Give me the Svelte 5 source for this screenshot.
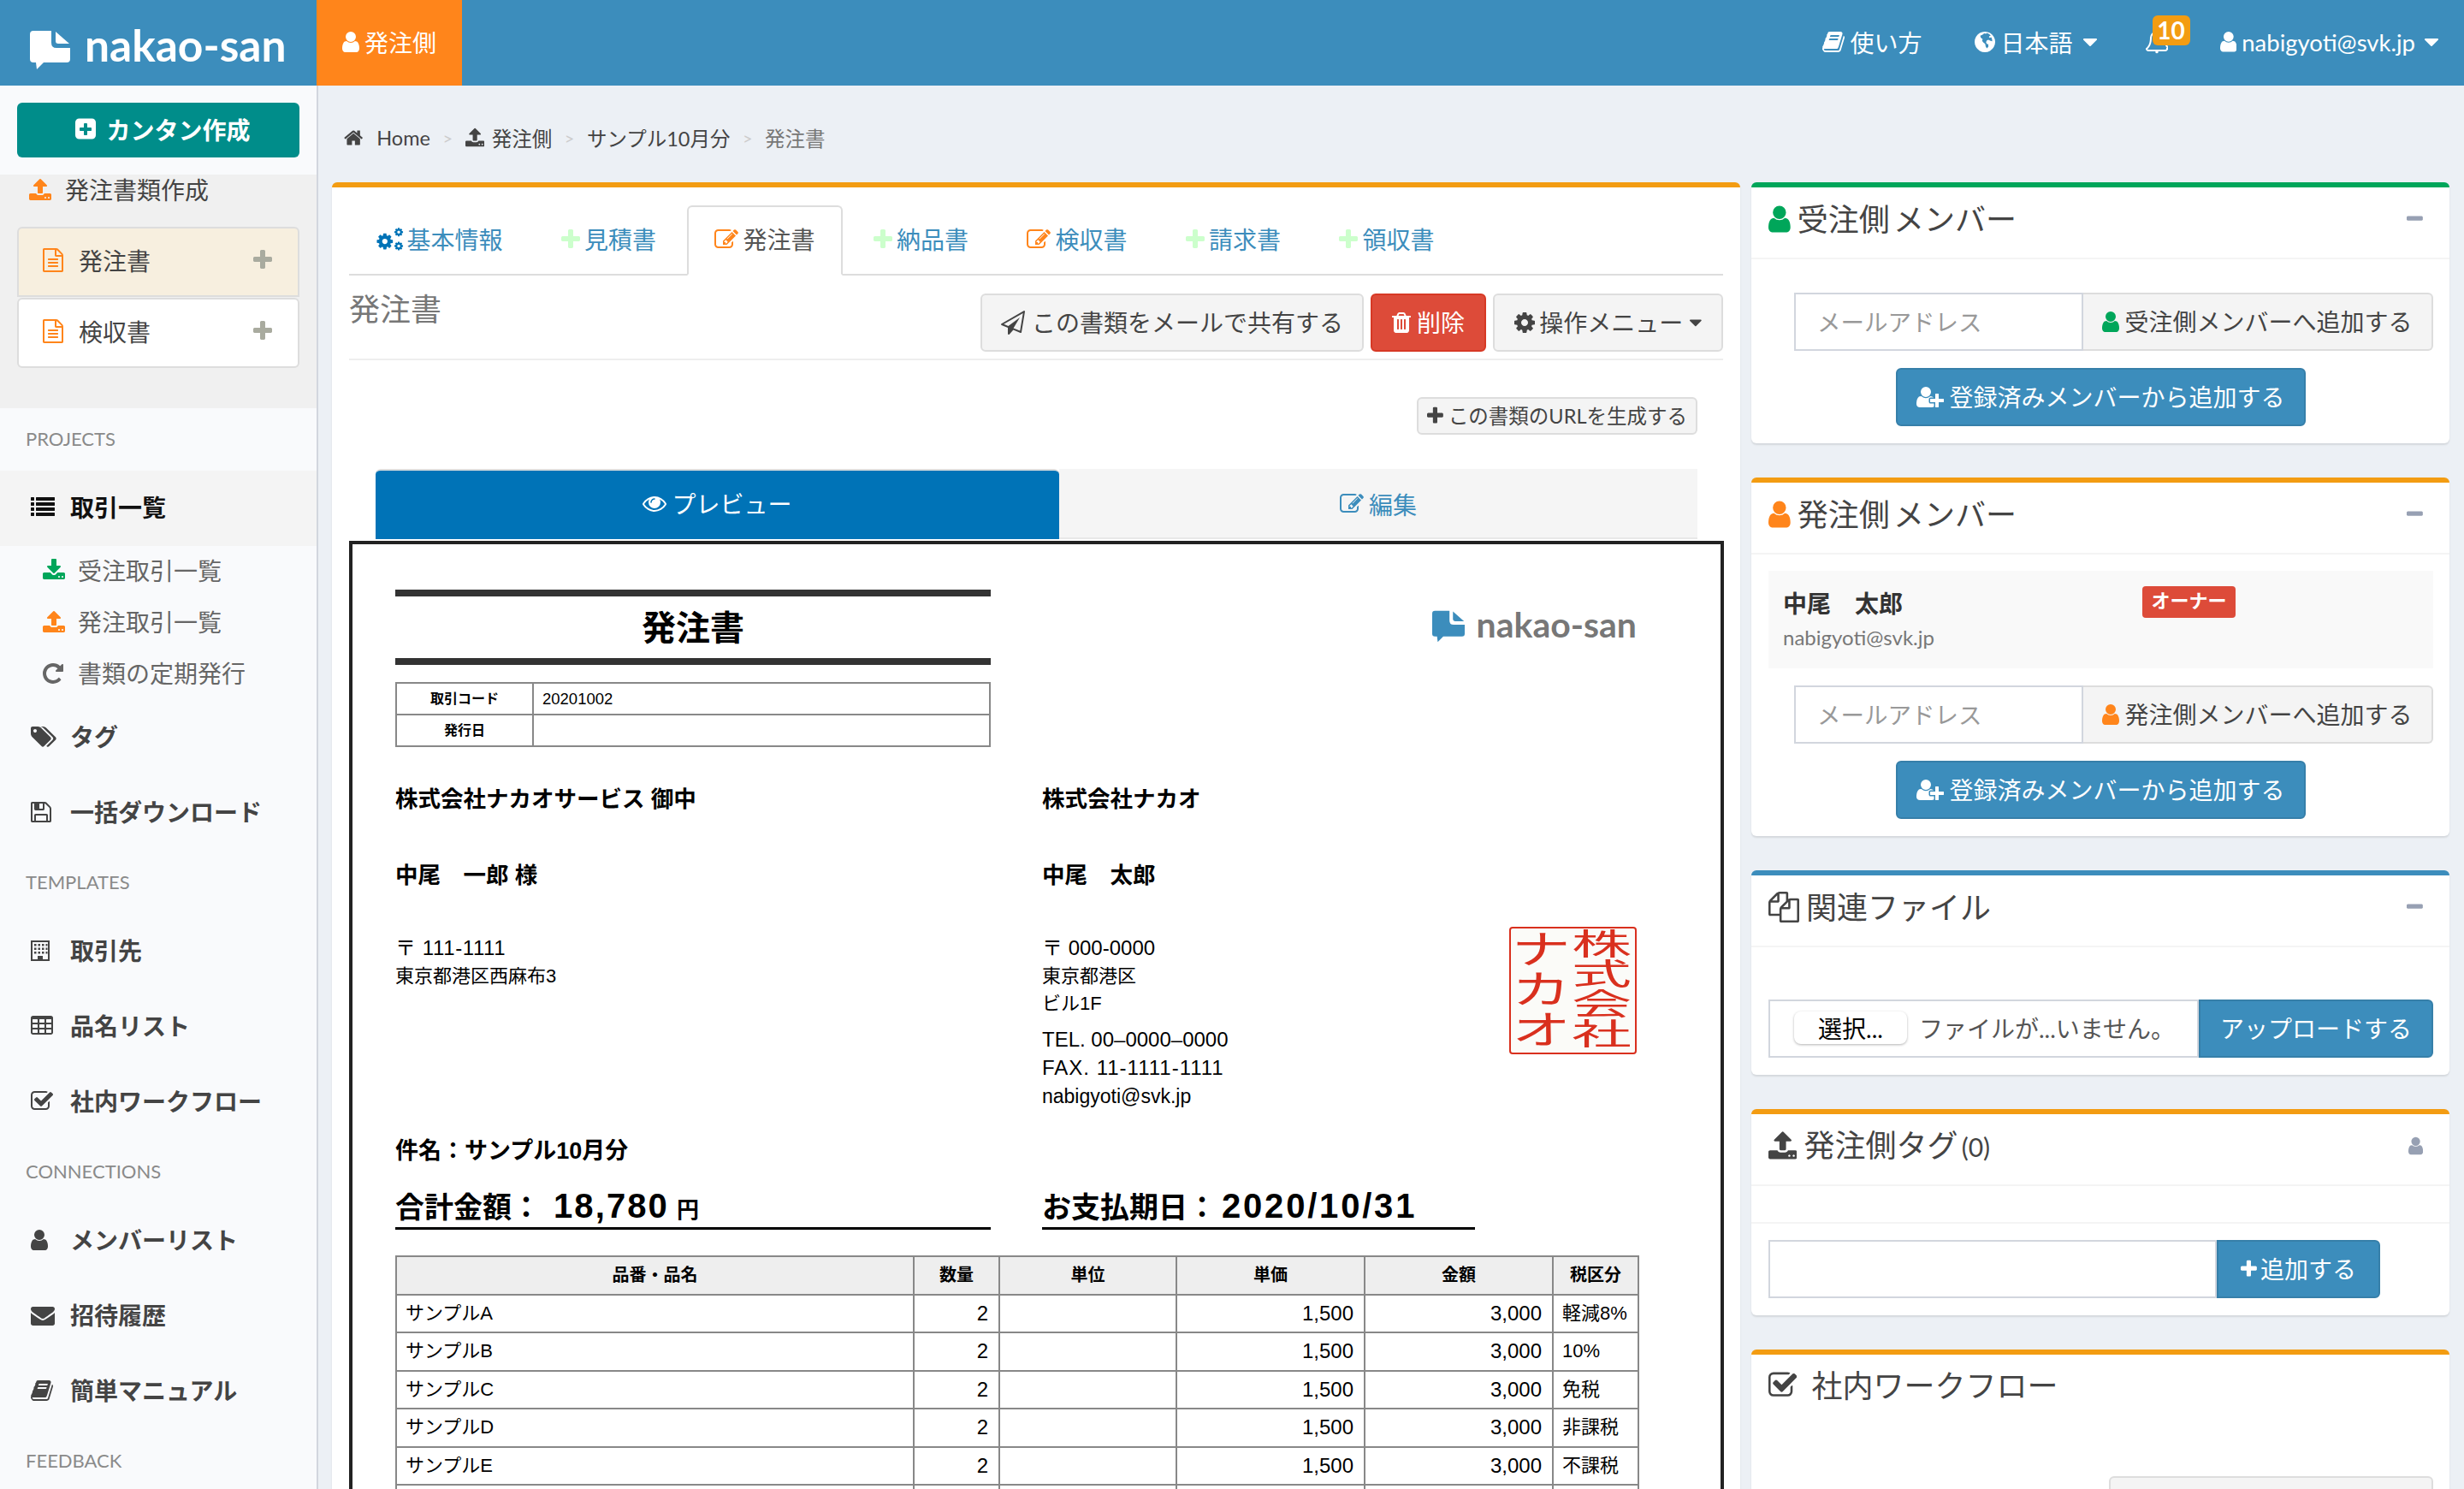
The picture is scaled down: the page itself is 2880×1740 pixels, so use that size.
<script lang="ts">
  // font-awesome 4 glyphs on their 1792 grid: [viewBox, path]
  const ICONS: Record<string, [string, string]> = {
    user: ["256 0 1280 1792", "M1536 1399q0 109-62.5 187t-150.5 78h-854q-88 0-150.5-78t-62.5-187q0-85 8.5-160.5t31.5-152 58.5-131 94-89 134.5-34.5q131 128 313 128t313-128q76 0 134.5 34.5t94 89 58.5 131 31.5 152 8.5 160.5zm-256-887q0 159-112.5 271.5t-271.5 112.5-271.5-112.5-112.5-271.5 112.5-271.5 271.5-112.5 271.5 112.5 112.5 271.5z"],
    plus: ["192 0 1408 1792", "M1600 736v192q0 40-28 68t-68 28h-416v416q0 40-28 68t-68 28h-192q-40 0-68-28t-28-68v-416h-416q-40 0-68-28t-28-68v-192q0-40 28-68t68-28h416v-416q0-40 28-68t68-28h192q40 0 68 28t28 68v416h416q40 0 68 28t28 68z"],
    minus: ["192 0 1408 1792", "M1600 736v192q0 40-28 68t-68 28h-1216q-40 0-68-28t-28-68v-192q0-40 28-68t68-28h1216q40 0 68 28t28 68z"],
    caret: ["384 0 1024 1792", "M1408 704q0 26-19 45l-448 448q-19 19-45 19t-45-19l-448-448q-19-19-19-45t19-45 45-19h896q26 0 45 19t19 45z"],
    plusSquare: ["128 0 1536 1792", "M1344 960v-128q0-26-19-45t-45-19h-256v-256q0-26-19-45t-45-19h-128q-26 0-45 19t-19 45v256h-256q-26 0-45 19t-19 45v128q0 26 19 45t45 19h256v256q0 26 19 45t45 19h128q26 0 45-19t19-45v-256h256q26 0 45-19t19-45zm320-576v960q0 119-84.5 203.5t-203.5 84.5h-960q-119 0-203.5-84.5t-84.5-203.5v-960q0-119 84.5-203.5t203.5-84.5h960q119 0 203.5 84.5t84.5 203.5z"],
    upload: ["64 0 1664 1792", "M1344 1472q0-26-19-45t-45-19-45 19-19 45 19 45 45 19 45-19 19-45zm256 0q0-26-19-45t-45-19-45 19-19 45 19 45 45 19 45-19 19-45zm128-224v320q0 40-28 68t-68 28h-1472q-40 0-68-28t-28-68v-320q0-40 28-68t68-28h427q21 56 70.5 92t110.5 36h256q61 0 110.5-36t70.5-92h427q40 0 68 28t28 68zm-325-648q-17 40-59 40h-256v448q0 26-19 45t-45 19h-256q-26 0-45-19t-19-45v-448h-256q-42 0-59-40-17-39 14-69l448-448q18-19 45-19t45 19l448 448q31 30 14 69z"],
    download: ["64 0 1664 1792", "M1344 1344q0-26-19-45t-45-19-45 19-19 45 19 45 45 19 45-19 19-45zm256 0q0-26-19-45t-45-19-45 19-19 45 19 45 45 19 45-19 19-45zm128-224v320q0 40-28 68t-68 28h-1472q-40 0-68-28t-28-68v-320q0-40 28-68t68-28h465l135 136q58 56 136 56t136-56l136-136h464q40 0 68 28t28 68zm-325-569q17 41-14 70l-448 448q-18 19-45 19t-45-19l-448-448q-31-29-14-70 17-39 59-39h256v-448q0-26 19-45t45-19h256q26 0 45 19t19 45v448h256q42 0 59 39z"],
    file: ["128 0 1536 1792", "M1596 380q28 28 48 76t20 88v1152q0 40-28 68t-68 28h-1344q-40 0-68-28t-28-68v-1600q0-40 28-68t68-28h896q40 0 88 20t76 48zm-444-244v376h376q-10-29-22-41l-313-313q-12-12-41-22zm384 1528v-1024h-416q-40 0-68-28t-28-68v-416h-768v1536h1280zm-1024-864q0-14 9-23t23-9h704q14 0 23 9t9 23v64q0 14-9 23t-23 9h-704q-14 0-23-9t-9-23v-64zm736 224q14 0 23 9t9 23v64q0 14-9 23t-23 9h-704q-14 0-23-9t-9-23v-64q0-14 9-23t23-9h704zm0 256q14 0 23 9t9 23v64q0 14-9 23t-23 9h-704q-14 0-23-9t-9-23v-64q0-14 9-23t23-9h704z"],
    home: ["64 0 1664 1792", "M1472 992v480q0 26-19 45t-45 19h-384v-384h-256v384h-384q-26 0-45-19t-19-45v-480q0-1 .5-3t.5-3l575-474 575 474q1 2 1 6zm223-69l-62 74q-8 9-21 11h-3q-13 0-21-7l-692-577-692 577q-12 8-24 7-13-2-21-11l-62-74q-8-10-7-23.5t11-21.5l719-599q32-26 76-26t76 26l244 204v-195q0-14 9-23t23-9h192q14 0 23 9t9 23v408l219 182q10 8 11 21.5t-7 23.5z"],
    list: ["0 0 1792 1792", "M256 1312v192q0 13-9.5 22.5t-22.5 9.5h-192q-13 0-22.5-9.5t-9.5-22.5v-192q0-13 9.5-22.5t22.5-9.5h192q13 0 22.5 9.5t9.5 22.5zm0-384v192q0 13-9.5 22.5t-22.5 9.5h-192q-13 0-22.5-9.5t-9.5-22.5v-192q0-13 9.5-22.5t22.5-9.5h192q13 0 22.5 9.5t9.5 22.5zm0-384v192q0 13-9.5 22.5t-22.5 9.5h-192q-13 0-22.5-9.5t-9.5-22.5v-192q0-13 9.5-22.5t22.5-9.5h192q13 0 22.5 9.5t9.5 22.5zm1536 768v192q0 13-9.5 22.5t-22.5 9.5h-1344q-13 0-22.5-9.5t-9.5-22.5v-192q0-13 9.5-22.5t22.5-9.5h1344q13 0 22.5 9.5t9.5 22.5zm-1536-1152v192q0 13-9.5 22.5t-22.5 9.5h-192q-13 0-22.5-9.5t-9.5-22.5v-192q0-13 9.5-22.5t22.5-9.5h192q13 0 22.5 9.5t9.5 22.5zm1536 768v192q0 13-9.5 22.5t-22.5 9.5h-1344q-13 0-22.5-9.5t-9.5-22.5v-192q0-13 9.5-22.5t22.5-9.5h1344q13 0 22.5 9.5t9.5 22.5zm0-384v192q0 13-9.5 22.5t-22.5 9.5h-1344q-13 0-22.5-9.5t-9.5-22.5v-192q0-13 9.5-22.5t22.5-9.5h1344q13 0 22.5 9.5t9.5 22.5zm0-384v192q0 13-9.5 22.5t-22.5 9.5h-1344q-13 0-22.5-9.5t-9.5-22.5v-192q0-13 9.5-22.5t22.5-9.5h1344q13 0 22.5 9.5t9.5 22.5z"],
    repeat: ["128 0 1536 1792", "M1664 256v448q0 26-19 45t-45 19h-448q-42 0-59-40-17-39 14-69l138-138q-148-137-349-137-104 0-198.5 40.5t-163.5 109.5-109.5 163.5-40.5 198.5 40.5 198.5 109.5 163.5 163.5 109.5 198.5 40.5q119 0 225-52t179-147q7-10 23-12 15 0 25 9l137 138q9 8 9.5 20.5t-7.5 22.5q-109 132-264 204.5t-327 72.5q-156 0-298-61t-245-164-164-245-61-298 61-298 164-245 245-164 298-61q147 0 284.5 55.5t244.5 156.5l130-129q29-31 70-14 39 17 39 59z"],
    tags: ["0 0 1920 1792", "M448 448q0-53-37.5-90.5t-90.5-37.5-90.5 37.5-37.5 90.5 37.5 90.5 90.5 37.5 90.5-37.5 37.5-90.5zm1067 576q0 53-37 90l-491 492q-39 37-91 37-53 0-90-37l-715-716q-38-37-64.5-101t-26.5-117v-416q0-52 38-90t90-38h416q53 0 117 26.5t102 64.5l715 714q37 39 37 91zm384 0q0 53-37 90l-491 492q-39 37-91 37-36 0-59-14t-53-45l470-470q37-37 37-90 0-52-37-91l-715-714q-38-38-102-64.5t-117-26.5h224q53 0 117 26.5t102 64.5l715 714q37 39 37 91z"],
    floppy: ["128 0 1536 1792", "M512 1536h768v-384h-768v384zm896 0h128v-896q0-14-10-38.5t-20-34.5l-281-281q-10-10-34-20t-39-10v416q0 40-28 68t-68 28h-576q-40 0-68-28t-28-68v-416h-128v1280h128v-416q0-40 28-68t68-28h832q40 0 68 28t28 68v416zm-384-928v-320q0-13-9.5-22.5t-22.5-9.5h-192q-13 0-22.5 9.5t-9.5 22.5v320q0 13 9.5 22.5t22.5 9.5h192q13 0 22.5-9.5t9.5-22.5zm640 32v928q0 40-28 68t-68 28h-1344q-40 0-68-28t-28-68v-1344q0-40 28-68t68-28h928q40 0 88 20t76 48l280 280q28 28 48 76t20 88z"],
    building: ["128 0 1408 1792", "M128 1664V128h1408v1536H128zm128-128h384v-256h384v256h384V256H256v1280zm128-1152v160h160V384H384zm288 0v160h160V384H672zm288 0v160h160V384H960zm288 0v160h128V384h-128zM384 672v160h160V672H384zm288 0v160h160V672H672zm288 0v160h160V672H960zm288 0v160h128V672h-128zM384 960v160h160V960H384zm288 0v160h160V960H672zm288 0v160h160V960H960zm288 0v160h128V960h-128z"],
    table: ["64 0 1664 1792", "M576 1376v-192q0-14-9-23t-23-9h-320q-14 0-23 9t-9 23v192q0 14 9 23t23 9h320q14 0 23-9t9-23zm0-384v-192q0-14-9-23t-23-9h-320q-14 0-23 9t-9 23v192q0 14 9 23t23 9h320q14 0 23-9t9-23zm512 384v-192q0-14-9-23t-23-9h-320q-14 0-23 9t-9 23v192q0 14 9 23t23 9h320q14 0 23-9t9-23zm-512-768v-192q0-14-9-23t-23-9h-320q-14 0-23 9t-9 23v192q0 14 9 23t23 9h320q14 0 23-9t9-23zm512 384v-192q0-14-9-23t-23-9h-320q-14 0-23 9t-9 23v192q0 14 9 23t23 9h320q14 0 23-9t9-23zm512 384v-192q0-14-9-23t-23-9h-320q-14 0-23 9t-9 23v192q0 14 9 23t23 9h320q14 0 23-9t9-23zm-512-768v-192q0-14-9-23t-23-9h-320q-14 0-23 9t-9 23v192q0 14 9 23t23 9h320q14 0 23-9t9-23zm512 384v-192q0-14-9-23t-23-9h-320q-14 0-23 9t-9 23v192q0 14 9 23t23 9h320q14 0 23-9t9-23zm0-384v-192q0-14-9-23t-23-9h-320q-14 0-23 9t-9 23v192q0 14 9 23t23 9h320q14 0 23-9t9-23zm128-320v1088q0 66-47 113t-113 47h-1344q-66 0-113-47t-47-113v-1088q0-66 47-113t113-47h1344q66 0 113 47t47 113z"],
    check: ["64 0 1664 1792", "M1472 930v318q0 119-84.5 203.5t-203.5 84.5h-832q-119 0-203.5-84.5t-84.5-203.5v-832q0-119 84.5-203.5t203.5-84.5h832q63 0 117 25 15 7 18 23 3 17-9 29l-49 49q-10 10-23 10-3 0-9-2-23-6-45-6h-832q-66 0-113 47t-47 113v832q0 66 47 113t113 47h832q66 0 113-47t47-113v-254q0-13 9-22l64-64q10-10 23-10 6 0 12 3 20 8 20 29zm231-489l-814 814q-24 24-57 24t-57-24l-430-430q-24-24-24-57t24-57l110-110q24-24 57-24t57 24l263 263 647-647q24-24 57-24t57 24l110 110q24 24 24 57t-24 57z"],
    envelope: ["0 0 1792 1792", "M1792 710v794q0 66-47 113t-113 47h-1472q-66 0-113-47t-47-113v-794q44 49 101 87 362 246 497 345 57 42 92.5 65.5t94.5 48 110 24.5h2q51 0 110-24.5t94.5-48 92.5-65.5q170-123 498-345 57-39 100-87zm0-294q0 79-49 151t-122 123q-376 261-468 325-10 7-42.5 30.5t-54 38-52 32.5-57.5 27-50 9h-2q-23 0-50-9t-57.5-27-52-32.5-54-38-42.5-30.5q-91-64-262-182.5t-205-142.5q-62-42-117-115.5t-55-136.5q0-78 41.5-130t118.5-52h1472q65 0 112.5 47t47.5 113z"],
    book: ["64 0 1664 1792", "M1703 478q40 57 18 129l-275 906q-19 64-76.5 107.5t-122.5 43.5h-923q-77 0-148.5-53.5t-99.5-131.5q-24-67-2-127 0-4 3-27t4-37q1-8-3-21.5t-3-19.5q2-11 8-21t16.5-23.5 16.5-23.5q23-38 45-91.5t30-91.5q3-10 .5-30t-.5-28q3-11 17-28t17-23q21-36 42-92t25-90q1-9-2.5-32t.5-28q4-13 22-30.5t22-22.5q19-26 42.5-84.5t27.5-96.5q1-8-3-25.5t-2-26.5q2-8 9-18t18-23 17-21q8-12 16.5-30.5t15-35 16-36 19.5-32 26.5-23.5 36-11.5 47.5 5.5l-1 3q38-9 51-9h761q74 0 114 56t18 130l-274 906q-36 119-71.5 153.5t-128.5 34.5h-869q-27 0-38 15-11 16-1 43 24 70 144 70h923q29 0 56-15.5t35-41.5l300-987q7-22 5-57 38 15 59 43zm-1064 2q-4 13 2 22.5t20 9.5h608q13 0 25.5-9.5t16.5-22.5l21-64q4-13-2-22.5t-20-9.5h-608q-13 0-25.5 9.5t-16.5 22.5zm-83 256q-4 13 2 22.5t20 9.5h608q13 0 25.5-9.5t16.5-22.5l21-64q4-13-2-22.5t-20-9.5h-608q-13 0-25.5 9.5t-16.5 22.5z"],
    edit: ["0 0 1792 1792", "M888 1184l116-116-152-152-116 116v56h96v96h56zm440-720q-16-16-33 1l-350 350q-17 17-1 33t33-1l350-350q17-17 1-33zm80 594v190q0 119-84.5 203.5t-203.5 84.5h-832q-119 0-203.5-84.5t-84.5-203.5v-832q0-119 84.5-203.5t203.5-84.5h832q63 0 117 25 15 7 18 23 3 17-9 29l-49 49q-14 14-32 8-23-6-45-6h-832q-66 0-113 47t-47 113v832q0 66 47 113t113 47h832q66 0 113-47t47-113v-126q0-13 9-22l64-64q15-15 35-7t20 29zm-96-738l288 288-672 672h-288v-288zm444 132l-92 92-288-288 92-92q28-28 68-28t68 28l152 152q28 28 28 68t-28 68z"],
    eye: ["0 0 1792 1792", "M1664 960q-152-236-381-353 61 104 61 225 0 185-131.5 316.5t-316.5 131.5-316.5-131.5-131.5-316.5q0-121 61-225-229 117-381 353 133 205 333.5 326.5t434.5 121.5 434.5-121.5 333.5-326.5zm-720-384q0-20-14-34t-34-14q-125 0-214.5 89.5t-89.5 214.5q0 20 14 34t34 14 34-14 14-34q0-86 61-147t147-61q20 0 34-14t14-34zm848 384q0 34-20 69-140 230-376.5 368.5t-499.5 138.5-499.5-139-376.5-368q-20-35-20-69t20-69q140-229 376.5-368t499.5-139 499.5 139 376.5 368q20 35 20 69z"],
    plane: ["0 0 1792 1792", "M1764 11q33 24 27 64l-256 1536q-5 29-32 45-14 8-31 8-11 0-24-5l-527-215-298 327q-18 21-47 21-14 0-23-4-19-7-30-23.5t-11-36.5v-452l-472-193q-37-14-40-55-3-39 32-59l1664-960q35-21 68 2zm-342 1499l221-1323-1434 827 336 137 863-639-478 797z"],
    trash: ["192 0 1408 1792", "M704 1376v-704q0-14-9-23t-23-9h-64q-14 0-23 9t-9 23v704q0 14 9 23t23 9h64q14 0 23-9t9-23zm256 0v-704q0-14-9-23t-23-9h-64q-14 0-23 9t-9 23v704q0 14 9 23t23 9h64q14 0 23-9t9-23zm256 0v-704q0-14-9-23t-23-9h-64q-14 0-23 9t-9 23v704q0 14 9 23t23 9h64q14 0 23-9t9-23zm-544-992h448l-48-117q-7-9-17-11h-317q-10 2-17 11zm928 32v64q0 14-9 23t-23 9h-96v948q0 83-47 143.5t-113 60.5h-832q-66 0-113-58.5t-47-141.5v-952h-96q-14 0-23-9t-9-23v-64q0-14 9-23t23-9h309l70-167q15-37 54-63t79-26h320q40 0 79 26t54 63l70 167h309q14 0 23 9t9 23z"],
    cog: ["128 0 1536 1792", "M1152 896q0-106-75-181t-181-75-181 75-75 181 75 181 181 75 181-75 75-181zm512-109v222q0 12-8 23t-20 13l-185 28q-19 54-39 91 35 50 107 138 10 12 10 25t-9 23q-27 37-99 108t-94 71q-12 0-26-9l-138-108q-44 23-91 38-16 136-29 186-7 28-36 28h-222q-14 0-24.5-8.5t-11.5-21.5l-28-184q-49-16-90-37l-141 107q-10 9-25 9-14 0-25-11-126-114-165-168-7-10-7-23 0-12 8-23 15-21 51-66.5t54-70.5q-27-50-41-99l-183-27q-13-2-21-12.5t-8-23.5v-222q0-12 8-23t19-13l186-28q14-46 39-92-40-57-107-138-10-12-10-24 0-10 9-23 26-36 98.5-107.5t94.5-71.5q13 0 26 10l138 107q44-23 91-38 16-136 29-186 7-28 36-28h222q14 0 24.5 8.5t11.5 21.5l28 184q49 16 90 37l142-107q9-9 24-9 13 0 25 10 129 119 165 170 7 8 7 22 0 12-8 23-15 21-51 66.5t-54 70.5q26 50 41 98l183 28q13 2 21 12.5t8 23.5z"],
    userPlus: ["0 0 2048 1792", "M704 896q-159 0-271.5-112.5t-112.5-271.5 112.5-271.5 271.5-112.5 271.5 112.5 112.5 271.5-112.5 271.5-271.5 112.5zm960 128h352q13 0 22.5 9.5t9.5 22.5v192q0 13-9.5 22.5t-22.5 9.5h-352v352q0 13-9.5 22.5t-22.5 9.5h-192q-13 0-22.5-9.5t-9.5-22.5v-352h-352q-13 0-22.5-9.5t-9.5-22.5v-192q0-13 9.5-22.5t22.5-9.5h352v-352q0-13 9.5-22.5t22.5-9.5h192q13 0 22.5 9.5t9.5 22.5v352zm-736 224q0 52 38 90t90 38h256v238q-68 50-171 50h-874q-121 0-194-69t-73-190q0-53 3.5-103.5t14-109 26.5-108.5 43-97.5 62-81 85.5-53.5 111.5-20q19 0 39 17 79 61 154.5 91.5t164.5 30.5 164.5-30.5 154.5-91.5q20-17 39-17 132 0 217 96h-223q-52 0-90 38t-38 90v192z"],
    files: ["0 0 1792 1792", "M1696 384q40 0 68 28t28 68v1216q0 40-28 68t-68 28h-960q-40 0-68-28t-28-68v-288h-544q-40 0-68-28t-28-68v-672q0-40 20-88t48-76l408-408q28-28 76-48t88-20h416q40 0 68 28t28 68v328q68-40 128-40h416zm-544 213l-299 299h299v-299zm-640-384l-299 299h299v-299zm196 647l316-316v-416h-384v416q0 40-28 68t-68 28h-416v640h512v-256q0-40 20-88t48-76zm956 804v-1152h-384v416q0 40-28 68t-68 28h-416v640h896z"],
    globe: ["0 0 1536 1792", "M768 128a768 768 0 1 0 .1 0zM620 300l120-40 110 30 60-60 180 70 120 130-90 10-50 90 70 60 100-40 60 120 20 170-120-30-170-70-120 50-60 130 90 150 80-10 10 180-110 130-90-120-40-210-130-90-100-140 40-130-140-100-40-150 150-60 110-90z"],
  };

  const TABS = [
    { label: "基本情報", icon: "cogs" },
    { label: "見積書", icon: "plus" },
    { label: "発注書", icon: "edit", active: true },
    { label: "納品書", icon: "plus" },
    { label: "検収書", icon: "edit" },
    { label: "請求書", icon: "plus" },
    { label: "領収書", icon: "plus" },
  ];

  const ROWS = [
    { name: "サンプルA", tax: "軽減8%" },
    { name: "サンプルB", tax: "10%" },
    { name: "サンプルC", tax: "免税" },
    { name: "サンプルD", tax: "非課税" },
    { name: "サンプルE", tax: "不課税" },
  ];
</script>

{#snippet ic(name: string, cls = "")}
  <svg class="ic {cls}" viewBox={ICONS[name][0]} preserveAspectRatio="xMinYMid" aria-hidden="true"><path d={ICONS[name][1]} /></svg>
{/snippet}

{#snippet logo(cls: string)}
  <svg class={cls} viewBox="0 0 47 45" aria-hidden="true">
    <path d="M4 0H25V14Q25 20 31 20H47V33Q47 37 43 37H16L8 45L7 37H4Q0 37 0 33V4Q0 0 4 0Z" />
    <path d="M30 1L46 15H33Q30 15 30 12Z" />
  </svg>
{/snippet}

{#snippet addMember(label: string, cls: string)}
  <div class="igroup indent">
    <div class="ifield ph">メールアドレス</div>
    <div class="iaddon">{@render ic("user", cls)}{label}</div>
  </div>
  <button class="btn blue center">{@render ic("userPlus")}登録済みメンバーから追加する</button>
{/snippet}

<header class="topbar">
  <div class="brand">
    {@render logo("brand-mark")}
    <span>nakao-san</span>
  </div>
  <div class="side-tab">{@render ic("user")}発注側</div>
  <nav class="topnav">
    <span class="nav-item">{@render ic("book")}使い方</span>
    <span class="nav-item">{@render ic("globe")}日本語{@render ic("caret", "caret")}</span>
    <span class="nav-item bell">
      <svg class="ic" viewBox="128 0 1664 1792" aria-hidden="true"><path class="bell-line" d="M1728 1408q0 52-38 90t-90 38h-1280q-52 0-90-38t-38-90q50-42 91-88t85-119.5 74.5-158.5 50-206 19.5-260q0-152 117-282.5t307-158.5q60-10 96-10t96 10q190 28 307 158.5t117 282.5q0 139 19.5 260t50 206 74.5 158.5 85 119.5 91 88z" /><circle cx="960" cy="1640" r="110" /></svg>
      <em class="badge">10</em>
    </span>
    <span class="nav-item me">{@render ic("user")}nabigyoti@svk.jp{@render ic("caret", "caret")}</span>
  </nav>
</header>

<div class="layout">
  <aside class="sidebar">
    <div class="quick"><button class="btn-quick">{@render ic("plusSquare")}カンタン作成</button></div>
    <section class="create">
      <div class="create-title">{@render ic("upload", "orange")}発注書類作成</div>
      <div class="doc-card on">{@render ic("file", "orange")}<span>発注書</span>{@render ic("plus", "card-plus")}</div>
      <div class="doc-card">{@render ic("file", "orange")}<span>検収書</span>{@render ic("plus", "card-plus")}</div>
    </section>

    <div class="head first">PROJECTS</div>
    <div class="row current">{@render ic("list")}<span>取引一覧</span></div>
    <div class="sub">{@render ic("download", "green")}<span>受注取引一覧</span></div>
    <div class="sub">{@render ic("upload", "orange")}<span>発注取引一覧</span></div>
    <div class="sub">{@render ic("repeat")}<span>書類の定期発行</span></div>
    <div class="row">{@render ic("tags")}<span>タグ</span></div>
    <div class="row">{@render ic("floppy")}<span>一括ダウンロード</span></div>
    <div class="head">TEMPLATES</div>
    <div class="row">{@render ic("building")}<span>取引先</span></div>
    <div class="row">{@render ic("table")}<span>品名リスト</span></div>
    <div class="row">{@render ic("check")}<span>社内ワークフロー</span></div>
    <div class="head">CONNECTIONS</div>
    <div class="row">{@render ic("user")}<span>メンバーリスト</span></div>
    <div class="row">{@render ic("envelope")}<span>招待履歴</span></div>
    <div class="row">{@render ic("book")}<span>簡単マニュアル</span></div>
    <div class="head">FEEDBACK</div>
  </aside>

  <main class="content">
    <div class="crumbs">
      {@render ic("home")}<span class="crumb-home">Home</span><i>&gt;</i>
      {@render ic("upload")}<span class="crumb-up">発注側</span><i>&gt;</i>
      <span>サンプル10月分</span><i>&gt;</i>
      <span class="muted">発注書</span>
    </div>

    <div class="columns">
      <section class="box main-box">
        <div class="tabs">
          {#each TABS as tab}
            <div class="tab" class:active={tab.active}>
              {#if tab.icon === "cogs"}
                <svg class="ic cogs" viewBox="0 0 2048 1792" aria-hidden="true">
                  <path transform="translate(-70 330) scale(.78)" d={ICONS.cog[1]} />
                  <path transform="translate(1290 -40) scale(.42)" d={ICONS.cog[1]} />
                  <path transform="translate(1290 1000) scale(.42)" d={ICONS.cog[1]} />
                </svg>
              {:else if tab.icon === "plus"}
                {@render ic("plus", "mint")}
              {:else}
                {@render ic("edit", "orange")}
              {/if}
              {tab.label}
            </div>
          {/each}
        </div>

        <div class="title-row">
          <h2>発注書</h2>
          <div class="actions">
            <button class="btn plain share">{@render ic("plane")}この書類をメールで共有する</button>
            <button class="btn danger">{@render ic("trash")}削除</button>
            <button class="btn plain menu">{@render ic("cog")}操作メニュー{@render ic("caret", "caret")}</button>
          </div>
        </div>

        <div class="url-row">
          <button class="btn plain small">{@render ic("plus")}この書類のURLを生成する</button>
        </div>

        <div class="view-tabs">
          <div class="view preview">{@render ic("eye")}プレビュー</div>
          <div class="view edit">{@render ic("edit")}編集</div>
        </div>

        <div class="sheet">
          <div class="grid">
            <div>
              <h1 class="sheet-title">発注書</h1>
              <table class="meta">
                <tbody>
                  <tr><th>取引コード</th><td>20201002</td></tr>
                  <tr><th>発行日</th><td></td></tr>
                </tbody>
              </table>
            </div>
            <div class="sheet-logo">
              {@render logo("sheet-mark")}
              <span>nakao-san</span>
            </div>
          </div>

          <div class="grid parties">
            <div>
              <p class="party">株式会社ナカオサービス 御中</p>
              <p class="party second">中尾　一郎 様</p>
              <p class="addr"><span class="lat">〒 111-1111</span><br />東京都港区西麻布3</p>
            </div>
            <div>
              <p class="party">株式会社ナカオ</p>
              <p class="party second">中尾　太郎</p>
              <div class="addr-row">
                <div>
                  <p class="addr"><span class="lat tight">〒 000-0000</span><br />東京都港区<br />ビル1F</p>
                  <p class="addr tel"><span class="lat tight">TEL. 00–0000–0000</span><br /><span class="lat wide">FAX. 11-1111-1111</span><br /><span class="mail">nabigyoti@svk.jp</span></p>
                </div>
                <div class="stamp"><span class="kana">ナカオ</span><span class="kanji">株式会社</span></div>
              </div>
            </div>
          </div>

          <p class="subject">件名：サンプル10月分</p>

          <div class="grid totals">
            <div class="total"><span class="tl">合計金額：</span><span class="amount">18,780</span><small>円</small></div>
            <div class="total due"><span class="tl">お支払期日：</span><span class="amount">2020/10/31</span></div>
          </div>

          <table class="items">
            <thead>
              <tr>
                <th class="c-name">品番・品名</th><th class="c-qty">数量</th><th class="c-unit">単位</th>
                <th class="c-price">単価</th><th class="c-price">金額</th><th class="c-qty">税区分</th>
              </tr>
            </thead>
            <tbody>
              {#each ROWS as row}
                <tr>
                  <td>{row.name}</td><td class="num">2</td><td></td>
                  <td class="num">1,500</td><td class="num">3,000</td><td>{row.tax}</td>
                </tr>
              {/each}
              <tr><td></td><td></td><td></td><td></td><td></td><td></td></tr>
            </tbody>
          </table>
        </div>
      </section>

      <div class="panels">
        <section class="box panel top-green">
          <div class="panel-head">{@render ic("user", "green")}<h3>受注側 メンバー</h3>{@render ic("minus", "tool")}</div>
          <div class="panel-body first-body">{@render addMember("受注側メンバーへ追加する", "green")}</div>
        </section>

        <section class="box panel">
          <div class="panel-head">{@render ic("user", "orange")}<h3>発注側 メンバー</h3>{@render ic("minus", "tool")}</div>
          <div class="panel-body">
            <div class="member">
              <div class="member-top"><strong>中尾　太郎</strong><span class="owner">オーナー</span></div>
              <div class="member-mail">nabigyoti@svk.jp</div>
            </div>
            {@render addMember("発注側メンバーへ追加する", "orange")}
          </div>
        </section>

        <section class="box panel top-blue">
          <div class="panel-head">{@render ic("files")}<h3 class="near">関連ファイル</h3>{@render ic("minus", "tool")}</div>
          <div class="panel-body file-body">
            <div class="igroup">
              <div class="ifield file-field"><span class="choose">選択...</span>ファイルが...いません。</div>
              <button class="btn blue joined upload">アップロードする</button>
            </div>
          </div>
        </section>

        <section class="box panel">
          <div class="panel-head">{@render ic("upload")}<h3 class="near">発注側タグ <small>(0)</small></h3>{@render ic("user", "tool")}</div>
          <div class="empty"></div>
          <div class="panel-body">
            <div class="igroup tag-group">
              <div class="ifield"></div>
              <button class="btn blue joined add">{@render ic("plus")}追加する</button>
            </div>
          </div>
        </section>

        <section class="box panel workflow">
          <div class="panel-head bare">{@render ic("check")}<h3 class="far">社内ワークフロー</h3></div>
          <div class="wf-body"><div class="wf-btn"></div></div>
        </section>
      </div>
    </div>
  </main>
</div>

<style>
  :global(body) {
    margin: 0;
    height: 1740px;
    overflow: hidden;
    background: #ecf0f5;
    font-family: Lato, "Noto Sans CJK JP", sans-serif;
    font-size: 28px;
    color: #444;
  }
  p, h1, h2, h3 { margin: 0; font-weight: 400; }
  button { font: inherit; cursor: pointer; }
  .ic { height: 1em; width: auto; flex: none; fill: currentColor; display: block; }
  .orange { color: #ff851b; }
  .green { color: #00a65a; }
  .mint { color: #ccffcc; }
  .caret { height: 28px; }

  /* top bar */
  .topbar { height: 100px; display: flex; background: #3c8dbc; color: #fff; }
  .brand { width: 370px; padding-left: 35px; box-sizing: border-box; display: flex; align-items: center; gap: 17px; font-size: 51.5px; font-weight: 700; }
  .brand-mark { width: 47px; height: 45px; fill: #fff; margin-top: 16px; }
  .brand span { line-height: 100px; margin-top: 4px; }
  .side-tab { width: 170px; background: #ff851b; display: flex; align-items: center; gap: 6px; padding-left: 30px; box-sizing: border-box; padding-bottom: 2px; }
  .topnav { margin-left: auto; display: flex; align-items: center; padding-right: 30px; padding-bottom: 2px; }
  .nav-item { display: flex; align-items: center; gap: 7px; margin-left: 61px; }
  .nav-item .caret { margin-left: 5px; width: 16px; }
  .me { font-size: 27.5px; gap: 6px; }
  .bell { position: relative; margin-left: 57px; }
  .bell svg { height: 28px; }
  .bell-line { fill: none; stroke: #fff; stroke-width: 130; }
  .badge { position: absolute; left: 8px; top: -17px; width: 44px; height: 35px; line-height: 35px; background: #f39c12; border-radius: 6px; text-align: center; font-style: normal; font-weight: 700; font-size: 28px; }

  .layout { display: flex; height: 1640px; overflow: hidden; }

  /* sidebar */
  .sidebar { width: 372px; flex: none; box-sizing: border-box; background: #f9fafc; border-right: 2px solid #d2d6de; }
  .quick { padding: 20px 20px; }
  .btn-quick { width: 100%; height: 64px; display: flex; align-items: center; justify-content: center; gap: 12px; padding: 0 0 3px 11px; background: #008d8a; border: 0; border-radius: 6px; color: #fff; font-weight: 700; font-size: 28px; }
  .create { height: 273px; background: #f0f0f0; padding: 0 20px; box-sizing: border-box; }
  .create-title { height: 61px; display: flex; align-items: flex-start; gap: 16px; padding-left: 14px; line-height: 36px; }
  .create-title .ic { height: 28px; margin-top: 4px; }
  .doc-card { height: 82px; box-sizing: border-box; display: flex; align-items: center; gap: 18px; padding: 0 30px 5px 28px; background: #fff; border: 2px solid #ddd; border-radius: 6px; margin-bottom: 1px; }
  .doc-card.on { background: #f7efdf; border-radius: 6px 6px 0 0; }
  .doc-card span { flex: 1; }
  .card-plus { color: #a9ab9f; }
  .head { height: 74px; line-height: 74px; padding-left: 30px; font-size: 22px; color: #8a8a8a; box-sizing: border-box; }
  .head.first { height: 73px; line-height: 72px; }
  .row { height: 88px; display: flex; align-items: center; padding: 0 0 5px 36px; box-sizing: border-box; color: #444; font-weight: 700; }
  .row .ic { width: 32px; margin: 2px 14px 0 0; height: 28px; }
  .row.current { background: #f4f4f4; color: #111; }
  .sub { height: 60px; display: flex; align-items: center; padding: 0 0 5px 50px; box-sizing: border-box; color: #666; }
  .sub .ic { width: 26px; height: 28px; margin: 2px 15px 0 0; }

  /* breadcrumb */
  .content { flex: 1; min-width: 0; padding: 0 17px 0 16px; }
  .crumbs { height: 113px; display: flex; align-items: center; padding: 8px 0 0 14px; font-size: 23.5px; color: #444; box-sizing: border-box; }
  .crumbs .ic { height: 24px; }
  .crumbs i { font-style: normal; color: #ccc; margin: 0 14.5px; font-size: 20px; }
  .crumb-home { margin-left: 16px; }
  .crumb-up { margin-left: 9px; }
  .muted { color: #777; }

  /* boxes */
  .columns { display: flex; gap: 13px; align-items: flex-start; }
  .box { background: #fff; border-top: 6px solid #f39c12; border-radius: 6px; box-shadow: 0 2px 2px rgba(0, 0, 0, 0.1); box-sizing: border-box; }
  .main-box { width: 1646px; flex: none; padding: 0 20px; height: 1600px; }

  .tabs { display: flex; padding-top: 21px; border-bottom: 2px solid #ddd; height: 80px; }
  .tab { height: 80px; box-sizing: border-box; display: flex; align-items: center; gap: 5.5px; padding: 0 30px 3px; border: 2px solid transparent; margin-right: 4px; color: #3c8dbc; }
  .tab .ic { height: 28px; margin-top: 3px; }
  .tab .cogs { color: #0073b7; margin-right: -2px; }
  .tab.active { color: #555; background: #fff; border-color: #ddd #ddd #fff; border-radius: 6px 6px 0 0; height: 82px; padding-bottom: 5px; }

  .title-row { display: flex; justify-content: space-between; padding-top: 21px; padding-bottom: 8px; border-bottom: 2px solid #eee; }
  h2 { font-size: 36px; color: #777; line-height: 36px; }
  .actions { display: flex; gap: 8px; }
  .btn { display: inline-flex; align-items: center; justify-content: center; box-sizing: border-box; height: 68px; padding: 0 0 3px; border-radius: 6px; border: 2px solid transparent; white-space: nowrap; }
  .btn .ic { margin-top: 3px; }
  .plain { background: #f4f4f4; border-color: #ddd; color: #444; }
  .share { width: 448px; gap: 8px; }
  .danger { width: 135px; background: #dd4b39; border-color: #d73925; color: #fff; gap: 7px; }
  .danger .ic { height: 28px; }
  .menu { width: 269px; gap: 5px; }
  .menu .ic { height: 28px; }
  .menu .caret { height: 24px; margin-left: 3px; }
  .url-row { display: flex; justify-content: flex-end; padding: 43px 30px 0 0; }
  .small { height: 44px; width: 328px; font-size: 23.5px; gap: 6px; }
  .small .ic { height: 24px; }

  .view-tabs { display: flex; margin: 40px 30px 2px 31px; height: 82px; }
  .view { display: flex; align-items: center; justify-content: center; gap: 6px; box-sizing: border-box; }
  .preview { width: 799px; flex: none; background: #0073b7; color: #fff; border-top: 2px solid #ddd; border-radius: 6px 6px 0 0; padding-bottom: 4px; }
  .edit { flex: 1; background: #f5f5f5; color: #3c8dbc; border-bottom: 2px solid #e8e8e8; padding-top: 2px; }
  .view .ic { height: 28px; }

  /* sheet */
  .sheet { border: 4px solid #222; padding: 53px 0 0 50px; margin-right: -1px; font-family: "Liberation Sans", "Noto Sans CJK JP", sans-serif; color: #000; height: 1200px; box-sizing: border-box; }
  .grid { display: grid; grid-template-columns: 696px 696px; column-gap: 60px; width: 1452px; }
  .sheet-title { height: 72px; line-height: 74px; border-top: 8px solid #333; border-bottom: 8px solid #333; text-align: center; font-size: 40px; font-weight: 700; margin-bottom: 20px; }
  .meta { width: 696px; border-collapse: collapse; font-size: 16px; table-layout: fixed; }
  .meta th, .meta td { border: 2px solid #888; height: 37px; padding: 0; box-sizing: border-box; line-height: 30px; }
  .meta th { width: 160px; font-weight: 700; }
  .meta td { padding-left: 10px; font-size: 18.5px; }
  .sheet-logo { display: flex; justify-content: flex-end; align-items: center; gap: 14px; height: 50px; margin-top: 15px; width: 695px; font-family: Lato, sans-serif; font-size: 41px; font-weight: 700; color: #777; }
  .sheet-mark { width: 38px; height: 38px; fill: #3c8dbc; margin-top: 6px; }

  .parties { margin-top: 41px; }
  .party { font-size: 26.5px; font-weight: 700; line-height: 40px; }
  .party.second { margin-top: 49px; }
  .party + .addr, .addr-row { margin-top: 49px; }
  .addr { font-size: 22px; line-height: 32px; }
  .addr.tel { margin-top: 10px; }
  .lat { font-size: 24px; letter-spacing: 0.6px; }
  .lat.tight { letter-spacing: 0; }
  .lat.wide { letter-spacing: 1px; }
  .mail { font-size: 23px; }
  .addr-row { display: flex; justify-content: space-between; width: 695px; }
  .stamp { width: 149px; height: 149px; margin-top: -9px; box-sizing: border-box; border: 2px solid #d9301e; border-radius: 4px; background: #fbfbf8; color: #d9301e; display: flex; font-family: "Noto Sans CJK JP", sans-serif; }
  .kana, .kanji { writing-mode: vertical-rl; text-orientation: upright; display: block; white-space: nowrap; transform-origin: left top; flex: none; }
  .kana { width: 47px; height: 141px; font-size: 47px; line-height: 47px; transform: scaleX(1.5); margin-right: 24px; }
  .kanji { width: 35px; height: 140px; font-size: 35px; line-height: 35px; transform: scaleX(2); }

  .subject { margin-top: 27px; font-size: 27px; font-weight: 700; line-height: 40px; }
  .totals { margin-top: 22px; }
  .total { height: 50px; box-sizing: border-box; border-bottom: 3px solid #000; font-weight: 700; display: flex; align-items: baseline; line-height: 44px; }
  .tl { font-size: 34px; }
  .amount { font-size: 40px; letter-spacing: 2.1px; margin-left: 15px; }
  .total small { font-size: 26px; margin-left: 9px; }
  .due { width: 506px; }
  .due .amount { margin-left: 6px; letter-spacing: 2.8px; }

  .items { margin-top: 30px; width: 1452px; border-collapse: collapse; table-layout: fixed; font-size: 22px; }
  .items th, .items td { border: 2px solid #888; height: 44.5px; padding: 0 10px; box-sizing: border-box; white-space: nowrap; line-height: 30px; }
  .items th { background: #eee; font-size: 20px; font-weight: 700; padding: 0; }
  .c-name { width: 605px; }
  .c-qty { width: 100px; }
  .c-unit { width: 207px; }
  .c-price { width: 220px; }
  .items td.num { text-align: right; font-size: 24px; padding-right: 12px; }

  /* right panels */
  .panels { width: 816px; flex: none; display: flex; flex-direction: column; gap: 40px; }
  .top-green { border-top-color: #00a65a; }
  .top-blue { border-top-color: #3c8dbc; }
  .panel-head { height: 84px; box-sizing: border-box; display: flex; align-items: center; padding: 0 31px 8px 20px; border-bottom: 2px solid #f4f4f4; font-size: 36px; }
  .panel-head.bare { border-bottom: 0; padding-bottom: 12px; }
  .panel-head h3 { flex: 1; font-size: 36px; margin-left: 8px; line-height: 40px; word-spacing: -5px; }
  .panel-head h3.far { margin-left: 17px; }
  .panel-head h3 small { font-size: 30px; }
  .tool { color: #97a0b3; height: 24px; }
  .panel-body { padding: 19px 19px 20px 20px; display: flex; flex-direction: column; align-items: stretch; }
  .first-body { padding-top: 39px; }
  .file-body { padding-top: 61px; }
  .member { height: 114px; background: #f9f9f9; padding: 0 17px; box-sizing: border-box; margin-bottom: 20px; }
  .member-top { display: flex; align-items: center; height: 76px; }
  .member-top strong { width: 420px; font-weight: 700; color: #333; margin-top: -2px; }
  .owner { width: 109px; height: 37px; line-height: 34px; background: #dd4b39; border-radius: 4px; color: #fff; font-size: 22px; font-weight: 700; text-align: center; margin-top: -4px; }
  .member-mail { font-size: 24px; color: #777; line-height: 20px; margin-top: -8px; }
  .igroup { display: flex; height: 68px; box-sizing: border-box; }
  .indent { margin-left: 30px; }
  .ifield { flex: 1; border: 2px solid #d2d6de; background: #fff; box-sizing: border-box; display: flex; align-items: center; min-width: 0; white-space: nowrap; }
  .ph { color: #999; padding: 0 0 3px 25px; font-size: 27.5px; }
  .iaddon { width: 409px; flex: none; box-sizing: border-box; display: flex; align-items: center; justify-content: center; gap: 6px; padding-bottom: 3px; background: #f4f4f4; border: 2px solid #ddd; border-left: 0; border-radius: 0 6px 6px 0; }
  .iaddon .ic { height: 28px; margin-top: 3px; }
  .blue { background: #3c8dbc; border-color: #367fa9; border-width: 2px; color: #fff; }
  .center { align-self: center; width: 479px; margin-top: 20px; gap: 6px; }
  .center .ic { height: 28px; }
  .joined { border-radius: 0 6px 6px 0; }
  .file-field { padding: 0 0 3px 28px; color: #555; }
  .choose { width: 132px; height: 38px; flex: none; margin-right: 14px; display: flex; align-items: center; justify-content: center; color: #000; border-radius: 8px; background: #fff; box-shadow: 0 1px 3px rgba(0, 0, 0, 0.3); }
  .upload { width: 274px; flex: none; }
  .empty { height: 42px; border-bottom: 2px solid #f4f4f4; }
  .tag-group { width: 715px; }
  .add { width: 191px; flex: none; gap: 4px; }
  .add .ic { height: 24px; }
  .workflow { height: 300px; }
  .wf-body { display: flex; justify-content: flex-end; padding: 58px 19px 0 0; }
  .wf-btn { width: 379px; height: 68px; box-sizing: border-box; background: #f4f4f4; border: 2px solid #ddd; border-radius: 6px; }
</style>
